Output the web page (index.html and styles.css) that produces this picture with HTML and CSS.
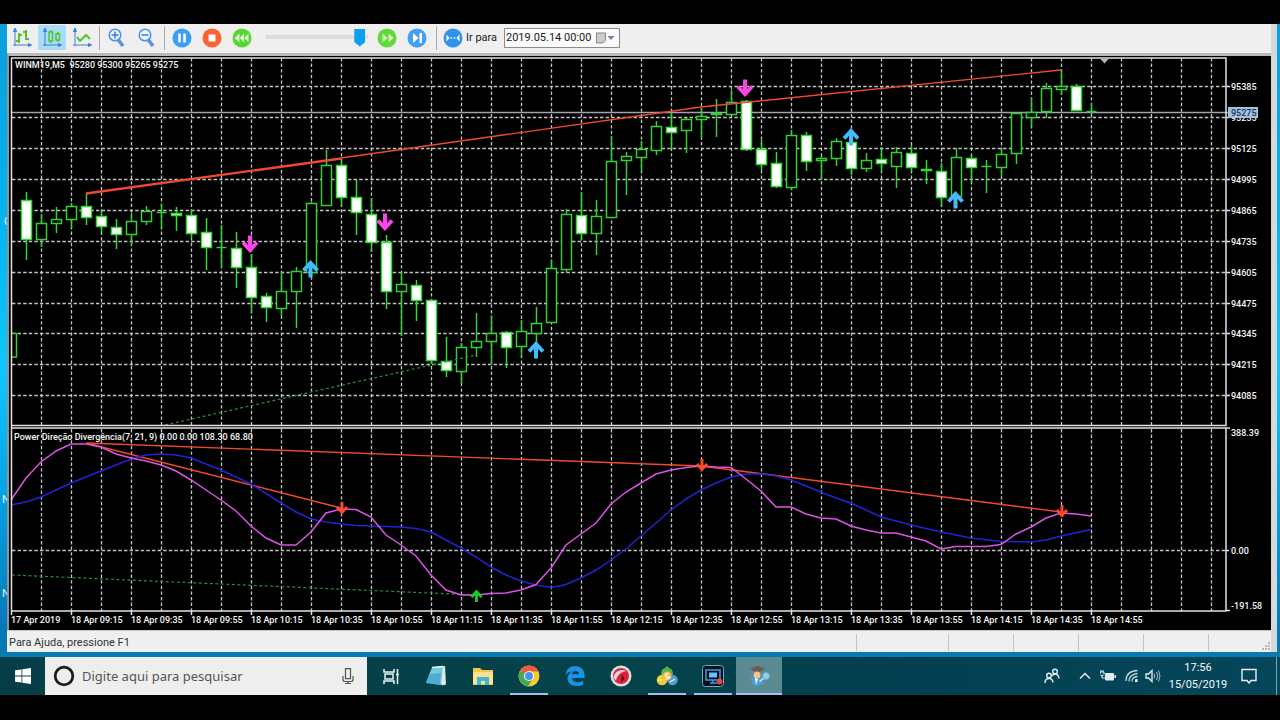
FILE: index.html
```html
<!DOCTYPE html>
<html lang="pt-BR">
<head>
<meta charset="utf-8">
<title>WINM19,M5</title>
<link rel="stylesheet" href="styles.css">
</head>
<body>
<main class="desktop">
  <span class="shortcut shortcut-a">C</span>
  <span class="shortcut shortcut-b">N</span>
  <span class="shortcut shortcut-c">N</span>
  <section class="window">
    <div class="toolbar">
      <button class="tool" aria-label="Barras"><svg viewBox="0 0 20 20"><g class="axis"><path d="M3 1v17M1 17h17M3 0L1.500 3.500h3zM19.500 17l-3-1.500v3z"/></g><path class="lime" d="M7 5v10M7 13h-3M7 7h3M14 2v10M14 4h-3M14 11h3"/></svg></button>
      <button class="tool tool-on" aria-label="Velas"><svg viewBox="0 0 20 20"><g class="axis"><path d="M3 1v17M1 17h17M3 0L1.500 3.500h3zM19.500 17l-3-1.500v3z"/></g><path class="lime thin" d="M7 4h3.500v9H7zM8.700 2v2M8.700 13v2M14 6h3.500v6H14zM15.700 4v2M15.700 12v2"/></svg></button>
      <button class="tool" aria-label="Linha"><svg viewBox="0 0 20 20"><g class="axis"><path d="M3 1v17M1 17h17M3 0L1.500 3.500h3zM19.500 17l-3-1.500v3z"/></g><path class="lime" d="M5 9l3 4 6-6 4 4"/></svg></button>
      <span class="sep"></span>
      <button class="tool" aria-label="Ampliar"><svg viewBox="0 0 20 20"><path d="M11 11.500l5 6.500" stroke="#5b8fe0" stroke-width="3.500"/><circle cx="8" cy="7" r="5.800" fill="#eef6ff" stroke="#4a92f0" stroke-width="1.500"/><path d="M4.500 7h7M8 3.500v7" stroke="#3779dd" stroke-width="1.500"/></svg></button>
      <button class="tool" aria-label="Reduzir"><svg viewBox="0 0 20 20"><path d="M11 11.500l5 6.500" stroke="#5b8fe0" stroke-width="3.500"/><circle cx="8" cy="7" r="5.800" fill="#eef6ff" stroke="#4a92f0" stroke-width="1.500"/><path d="M4.500 7h7" stroke="#3779dd" stroke-width="1.500"/></svg></button>
      <span class="sep"></span>
      <button class="tool" aria-label="Pausar"><svg viewBox="0 0 20 20"><circle cx="10" cy="10" r="9.500" fill="#3a9df6"/><path d="M7.500 5.500v9M12.500 5.500v9" stroke="#fff" stroke-width="2.500"/></svg></button>
      <button class="tool" aria-label="Parar"><svg viewBox="0 0 20 20"><circle cx="10" cy="10" r="9.500" fill="#fb6334"/><path d="M6.500 6.500h7v7h-7z" fill="#fff"/></svg></button>
      <button class="tool" aria-label="Mais lento"><svg viewBox="0 0 20 20"><circle cx="10" cy="10" r="9.500" fill="#5bd334"/><path d="M7.500 5.500v9L2.500 10zM12 5.500v9L7.800 10zM16.500 5.500v9L12.200 10z" fill="#d5f8c5"/></svg></button>
      <input class="speed" type="range" min="0" max="100" value="97" aria-label="Velocidade">
      <button class="tool" aria-label="Mais rápido"><svg viewBox="0 0 20 20"><circle cx="10" cy="10" r="9.500" fill="#62d93a"/><path d="M5.500 5.500v9L10.500 10zM11.500 5.500v9l5-4.500z" fill="#d5f8c5"/></svg></button>
      <button class="tool" aria-label="Próxima barra"><svg viewBox="0 0 20 20"><circle cx="10" cy="10" r="9.500" fill="#429ff4"/><path d="M6 5v10l5.500-5zM12.500 5H15v10h-2.500z" fill="#fff"/></svg></button>
      <span class="sep sep-last"></span>
      <button class="tool goto" id="goto"><svg viewBox="0 0 20 20"><circle cx="10" cy="10" r="9.500" fill="#2f92ee"/><path d="M3.500 6.500v7L6.500 10zM16.500 6.500v7l-3-3.500zM7.500 9.200h1.600v1.600H7.500zM10.700 9.200h1.600v1.600h-1.600z" fill="#fff"/></svg>Ir para</button>
      <div class="datebox">
        <input type="text" value="2019.05.14 00:00" aria-labelledby="goto">
        <button aria-label="Abrir calendário"><svg viewBox="0 0 20 12"><path d="M1.500 1h9v7.500l-2.500 2.500H1.500z" fill="#ccc" stroke="#888"/><path d="M12.500 4h7L16 8z" fill="#7a7ab8"/></svg></button>
      </div>
    </div>
    <div class="chart">
      <svg id="chart" viewBox="10 56 1261 574" role="img" aria-label="Gráfico WINM19, M5"></svg>
    </div>
    <footer class="status">
      <span class="help">Para Ajuda, pressione F1</span>
      <span class="cell cell-wide"></span><span class="cell"></span><span class="cell"></span><span class="cell"></span><span class="cell"></span><span class="cell cell-grip"><svg class="grip" viewBox="0 0 9 9"><path d="M6 0h2v2H6zM3 3h2v2H3zM6 3h2v2H6zM0 6h2v2H0zM3 6h2v2H3zM6 6h2v2H6z" fill="#b5b5b5"/></svg></span>
    </footer>
  </section>
</main>
<nav class="taskbar">
  <button class="start" aria-label="Iniciar"><svg viewBox="0 0 16 16"><path d="M0 2.300l6.500-.9v6.200H0zM7.300 1.300L16 0v7.600H7.300zM0 8.400h6.500v6.200L0 13.700zM7.300 8.400H16V16l-8.700-1.300z" fill="#fff"/></svg></button>
  <div class="search">
    <svg class="ring" viewBox="0 0 20 20"><circle cx="10" cy="10" r="8" fill="none" stroke="#1a1a1a" stroke-width="2.500"/></svg>
    <input type="text" placeholder="Digite aqui para pesquisar" aria-label="Pesquisar">
    <svg class="mic" viewBox="0 0 12 16"><path d="M3.500 .7h5v10h-5zM1 8v3.500q0 2 2 2h6q2 0 2-2V8M6 13.500v2M3 15.500h6" fill="none" stroke="#555" stroke-width="1.200"/></svg>
  </div>
  <button class="task" aria-label="Visão de tarefas"><svg viewBox="0 0 22 22"><path d="M4 4v3h10V4M5 9h8v5H5zM4 19v-3h10v3M17.500 4v15M16 9.500h3" fill="none" stroke="#e8f4f4" stroke-width="1.500"/></svg></button>
  <button class="task" aria-label="Bloco de notas"><svg viewBox="0 0 22 22"><path d="M6 2.500L19 1l1 18.500-4 1z" fill="#d9e8e9"/><path d="M6 2.500l11-1L15 20 0 17.500z" fill="#78c8e2"/><path d="M4 9l11-1-1 12-14-2z" fill="#51abd0"/><path d="M6 2.500l11-1" stroke="#e9fbff" stroke-width="1.500"/></svg></button>
  <button class="task" aria-label="Explorador de arquivos"><svg viewBox="0 0 22 22"><path d="M1 3h7l2 2h11v15H1z" fill="#f4c64d"/><path d="M1 7h20v12H1z" fill="#ffe08b"/><path d="M5 20v-8h12v8h-4v-4H9v4z" fill="#3fb5dc"/></svg></button>
  <button class="task running" aria-label="Chrome"><svg viewBox="0 0 22 22"><circle cx="11" cy="11" r="10.500" fill="#f5c92f"/><path d="M11 11L2 5.700A10.500 10.500 0 0 1 20.500 6.500H11z" fill="#ee5b40"/><path d="M2 5.700A10.500 10.500 0 0 0 10 21.400L15 13z" fill="#43ab52"/><circle cx="11" cy="11" r="5" fill="#f5f5f5"/><circle cx="11" cy="11" r="3.900" fill="#4b8df0"/></svg></button>
  <button class="task" aria-label="Edge"><svg viewBox="0 0 22 22"><path d="M1.500 10C2.500 4 6 1 11 1c6 0 9.500 4 9.500 9v3H8c.3 3 3 4.200 6 4.200 2 0 3.800-.5 5.200-1.400v4C17.500 20.700 15 21 12.700 21 7 21 3.500 18 3.500 13.500c0-3 1.800-5.500 4.500-7C5 6.800 3 8 1.500 10zM8.200 9.300h6.600c0-2.200-1-3.500-3.200-3.500-2 0-3.200 1.500-3.400 3.500z" fill="#1893e8"/></svg></button>
  <button class="task" aria-label="Navegador"><svg viewBox="0 0 22 22"><circle cx="11" cy="11" r="10.500" fill="#dcdedf"/><circle cx="11" cy="11" r="8" fill="#d8243c"/><path d="M3.500 12C5 6 11 3.500 16.500 6 12 6.500 8 8.500 6 15.500q-2-1-2.500-3.500z" fill="#fff" opacity=".8"/><path d="M12 9l2.500 5-3.500 3.500z" fill="#5b1020"/></svg></button>
  <button class="task running" aria-label="MetaTrader"><svg viewBox="0 0 22 22"><path d="M5 9q0-5 4-6l2-2 2 2q4 1 4 6l-3 3H8z" fill="#55b348"/><circle cx="6" cy="15" r="5.300" fill="#e8d035"/><circle cx="16.500" cy="15" r="5.300" fill="#4b9fd9"/><circle cx="11" cy="11" r="4.500" fill="#f6b34b"/><path d="M13 9q-4-1-4 1t4 2-4 2M11 7.500v7" fill="none" stroke="#fff5d0" stroke-width="1.200"/><path d="M2 15h4M14 17l5-3" stroke="#fff9c0" stroke-width="1.200"/></svg></button>
  <button class="task running" aria-label="Gravador de tela"><svg viewBox="0 0 22 22"><rect x="0.500" y="0.500" width="21" height="21" rx="3" fill="#03101c" stroke="#7ba7b8"/><path d="M4 5h14v10H4zM8 18h7M11 15v3" fill="none" stroke="#429ddd" stroke-width="1.500"/><path d="M7 7.500h8v5H7z" fill="#6bc0ff"/><circle cx="17.500" cy="16.500" r="3" fill="#e2493f"/></svg></button>
  <button class="task running active" aria-label="Testador de estratégia"><svg viewBox="0 0 22 22"><path d="M2 4l8-3.500L17 4l-7 4z" fill="#6b5c56"/><path d="M5 6q5 3 9 0v4H5z" fill="#8b7469"/><circle cx="9" cy="10" r="3.500" fill="#edc49b"/><path d="M3 12l6 2 5-2 2 6-8 3-4-2z" fill="#4aa0dc"/><path d="M7 13l3 1-2 6z" fill="#fff"/><circle cx="18" cy="11" r="3.500" fill="#93cdf0" stroke="#6aa7cf"/><path d="M15.500 13.500l-4 3" stroke="#d9e9f0" stroke-width="1.500"/></svg></button>
  <div class="tray">
    <svg class="people" viewBox="0 0 16 16"><g fill="none" stroke="#dfeef0" stroke-width="1.400"><circle cx="5" cy="7.500" r="2.300"/><path d="M1 15q0-4.500 4-4.500 3.500 0 4 4"/><circle cx="11" cy="3.500" r="2.300"/><path d="M8 8q1-2 3-2 3.500 0 4 4.500"/></g></svg>
    <svg class="chevron" viewBox="0 0 12 12"><path d="M1 8.500l5-5 5 5" fill="none" stroke="#dfeef0" stroke-width="1.500"/></svg>
    <svg class="battery" viewBox="0 0 16 12"><path d="M5.500 3.500h8v6.500h-8z" fill="#dfeef0" stroke="#dfeef0"/><path d="M14.500 5h1.500v3h-1.500z" fill="#dfeef0"/><path d="M0 2h4v2.500l-1 1H1l-1-1zM1 0v2M3 0v2M2 5.500V8h3" fill="none" stroke="#dfeef0"/></svg>
    <svg class="wifi" viewBox="0 0 14 14"><g fill="none" stroke="#bcd5da" stroke-width="1.300"><path d="M1 12Q1 2 12.500 1.500M4 12.500q0-7 8.500-8M7 12.500Q7 8 12.500 7.500"/></g><path d="M10 13v-2.500l2.500-.5v3z" fill="#fff"/></svg>
    <svg class="speaker" viewBox="0 0 16 14"><path d="M1 5h2.500L7 1.500v11L3.500 9H1z" fill="none" stroke="#e8f4f4" stroke-width="1.300"/><path d="M9 4.500q1.500 2.500 0 5M11.500 3q2.500 4 0 8M13.500 1.500q3 5.500 0 11" fill="none" stroke="#9fc0c8"/></svg>
    <time class="clock" datetime="2019-05-15T17:56"><span>17:56</span><span>15/05/2019</span></time>
    <svg class="notice" viewBox="0 0 16 16"><path d="M1 1.500h14v11h-5L8 15l-2-2.500H1z" fill="none" stroke="#e8f4f4" stroke-width="1.400"/></svg>
  </div>
</nav>
<script src="chart.js"></script>
</body>
</html>
```
FILE: styles.css
```css
* { box-sizing: border-box; }

body {
  margin: 0;
  min-height: 100vh;
  padding: 24px 0 25px;
  display: flex;
  flex-direction: column;
  background: #000;
  font-family: Roboto, "Noto Sans", sans-serif;
}

button {
  border: 0;
  padding: 0;
  background: none;
  font: inherit;
  color: inherit;
}

svg { display: block; }

.desktop {
  position: relative;
  flex: 1;
  padding: 0 3px 5px 7px;
  background: linear-gradient(#0b9fdc 0%, #03b4ec 30%, #10c6fa 55%, #06a6e8 72%, #0576b6 97%, #0a7bad 100%);
}

.shortcut {
  position: absolute;
  left: 0;
  width: 7px;
  padding-left: 2px;
  overflow: hidden;
  font-size: 11px;
  line-height: 14px;
  color: #e6f6ff;
}
.shortcut-a { top: 191px; padding-left: 4px; }
.shortcut-b { top: 469px; }
.shortcut-c { top: 563px; }

.window {
  display: flex;
  flex-direction: column;
  height: 100%;
  background: #eeeeee;
  border-right: 6px solid #d4dadc;
}

.toolbar {
  display: flex;
  align-items: center;
  gap: 2px;
  height: 29px;
  padding: 0 0 2px 1px;
  background: #eeefee;
}

.tool {
  display: flex;
  align-items: center;
  justify-content: center;
  width: 28px;
  height: 25px;
}
.tool svg { width: 20px; height: 20px; flex: none; }
.tool-on { background: #a9dcf6; }
.axis { fill: #3d7fdc; stroke: #3d7fdc; stroke-width: 1; }
.lime { fill: none; stroke: #4fc531; stroke-width: 2; }
.lime.thin { stroke-width: 1.5px; }

.sep { width: 1px; height: 24px; margin: 0 1px; background: #a9a9a9; }
.sep-last { margin: 0 0 0 3px; }

.speed {
  appearance: none;
  width: 102px;
  height: 20px;
  margin: 0 3px 0 8px;
  background: linear-gradient(#dcdcdc, #dcdcdc) center 7px / 100% 4px no-repeat;
}
.speed::-webkit-slider-thumb {
  appearance: none;
  width: 11px;
  height: 18px;
  background: #0a9ff0;
  clip-path: polygon(0 0, 100% 0, 100% 75%, 50% 100%, 0 75%);
}

.goto {
  width: 59px;
  padding-left: 4px;
  justify-content: flex-start;
  gap: 3px;
  font-size: 11px;
  color: #222;
  white-space: nowrap;
}

.datebox {
  display: flex;
  align-items: center;
  width: 116px;
  height: 20px;
  margin-left: 4px;
  background: #fbfbfb;
  border: 1px solid #8b8b8b;
}
.datebox input {
  flex: 1;
  min-width: 0;
  padding: 0 0 0 1px;
  border: 0;
  background: none;
  font: 11px Roboto, "Noto Sans", sans-serif;
  color: #222;
}
.datebox button { width: 20px; margin-right: 4px; }

.chart {
  flex: 1;
  min-height: 0;
  padding-left: 1px;
  background: #000;
  border: solid #8f9496;
  border-width: 3px 0 0 2px;
  border-top-color: #b9bbbb;
}
.chart svg { width: 100%; height: 100%; }
.chart text { font-size: 9px; font-weight: 500; fill: #f6f6f6; }
.chart text.price-now { fill: #16345c; }

.grid { fill: none; stroke: #c4c4c4; stroke-width: 1.300px; stroke-dasharray: 3.400 2.200; }
.frame { fill: none; stroke: #e2e2e2; stroke-width: 1.500px; }
.hollow { fill: #000; stroke: #35cf35; stroke-width: 1.500px; }
.solid { fill: #fff; stroke: #35d935; stroke-width: 1.500px; }
.trend { fill: none; stroke: #f04a2e; stroke-width: 1.400px; }
.support { fill: none; stroke: #2f8b3c; stroke-width: 1.200px; stroke-dasharray: 3 2.500; }
.fast { fill: none; stroke: #dd52e6; stroke-width: 1.500px; }
.slow { fill: none; stroke: #2222d8; stroke-width: 1.500px; }

.status {
  display: flex;
  height: 22px;
  border-top: 1px solid #c9c9c9;
  background: #efefef;
}
.help {
  flex: 1;
  padding-left: 2px;
  font-size: 11px;
  line-height: 24px;
  color: #333;
}
.cell { width: 65px; margin: 3px 0 1px; border-left: 1px solid #c3c3c3; }
.cell-wide { width: 92px; }
.cell-grip { display: flex; align-items: flex-end; justify-content: flex-end; width: 63px; }
.grip { width: 9px; height: 9px; }

.taskbar {
  display: flex;
  height: 38px;
  background: linear-gradient(90deg, #063e48 0%, #05424a 50%, #033f50 70%, #06465a 100%);
}
.start { display: flex; align-items: center; justify-content: center; width: 45px; }
.start svg { width: 16px; height: 16px; }

.search {
  display: flex;
  align-items: center;
  width: 322px;
  margin-right: 1px;
  padding: 0 13px 0 8px;
  background: #eeeeee;
}
.ring { width: 22px; height: 22px; }
.mic { width: 12px; height: 16px; }
.search input {
  flex: 1;
  min-width: 0;
  padding: 0 0 0 7px;
  border: 0;
  background: none;
  font: 13px "Noto Sans", "Open Sans", sans-serif;
}
.search input::placeholder { color: #555; opacity: 1; }

.task {
  display: flex;
  align-items: center;
  justify-content: center;
  width: 46px;
}
.task svg { width: 22px; height: 22px; }
.running { background: linear-gradient(#9cc4f0, #9cc4f0) center bottom / 38px 2px no-repeat; }
.active { background: linear-gradient(#9cc4f0, #9cc4f0) center bottom / 100% 2px no-repeat #5b8a90; }

.tray {
  display: flex;
  align-items: center;
  margin-left: auto;
  margin-right: 3px;
  padding-right: 19px;
  border-right: 1px solid #7ba2ae;
}
.people { width: 16px; height: 16px; margin-right: 19px; }
.chevron { width: 12px; height: 12px; margin-right: 9px; }
.battery { width: 16px; height: 12px; margin-right: 9px; }
.wifi { width: 14px; height: 14px; margin-right: 6px; }
.speaker { width: 16px; height: 14px; margin-right: 9px; }
.clock {
  display: flex;
  flex-direction: column;
  align-items: center;
  width: 56px;
  font-size: 11px;
  line-height: 17px;
  color: #f2fafa;
}
.notice { width: 16px; height: 16px; margin-left: 15px; }
```
FILE: chart.js
```js
const svg = document.getElementById("chart");
const parts = [];

const STEP = 15;
const FIRST_X = 26.5;

// Grid
let grid = "";
for (let x = 41.5; x < 1226; x += 30) grid += `M${x} 58V425M${x} 429V611`;
const prices = [95385, 95255, 95125, 94995, 94865, 94735, 94605, 94475, 94345, 94215, 94085];
const priceY = i => Math.round(86 + i * 30.93) + 0.5;
prices.forEach((p, i) => { grid += `M12 ${priceY(i)}H1226`; });
grid += "M12 550.500H1226";
parts.push(`<path class="grid" d="${grid}"/>`);
parts.push('<path d="M12 112.500H1228" stroke="#a3a3b4" stroke-width="1.500"/>');

// Candles: high, body top, body bottom, low, filled
const candles = [
  [192,200,239,260,1],[214,223,239,247,0],[207,219,223,233,0],[203,206,219,228,0],[193,206,217,225,1],
  [211,216,226,232,1],[219,227,234,249,1],[213,221,234,245,0],[206,211,221,225,0],[204,212,212,228,0],
  [207,213,215,231,1],[210,215,233,239,1],[218,232,247,270,1],[225,247,247,268,0],[232,248,267,288,1],
  [254,267,297,313,1],[293,296,307,322,1],[272,291,308,316,0],[267,271,291,328,0],[202,203,272,275,0],
  [150,165,205,205,0],[159,165,197,207,1],[180,197,212,235,1],[198,214,242,252,1],[235,242,291,309,1],
  [272,284,291,336,0],[280,285,300,321,1],[299,300,360,364,1],[337,361,370,377,1],[343,347,371,383,0],
  [313,341,347,357,0],[316,333,341,364,0],[331,332,347,368,1],[320,331,346,357,0],[307,323,333,343,0],
  [260,268,322,323,0],[209,214,269,273,0],[192,215,233,240,1],[200,216,233,255,0],[136,161,217,217,0],
  [152,156,160,195,0],[141,149,157,172,0],[121,126,150,155,0],[112,127,132,149,1],[118,119,130,153,0],
  [108,116,119,138,0],[99,113,114,137,0],[90,102,114,114,0],[100,101,149,151,1],[140,149,164,170,1],
  [152,163,186,188,1],[130,135,187,190,0],[132,135,161,171,1],[156,158,160,180,0],[138,141,158,166,0],
  [138,142,168,175,1],[153,160,168,172,0],[147,159,163,172,1],[147,152,166,188,0],[145,153,167,172,1],
  [160,169,170,184,1],[163,171,197,207,1],[148,157,196,196,0],[155,158,167,183,1],[160,166,166,193,0],
  [148,154,167,176,0],[113,113,153,164,0],[98,112,117,127,0],[83,88,111,118,0],[70,86,89,95,0],
  [84,86,110,111,1],[103,111,111,114,0]
];
candles.forEach(([high, top, bottom, low, filled], i) => {
  const x = FIRST_X + i * STEP;
  const body = bottom === top
    ? `M${x - 5} ${top + 0.5}h10`
    : `M${x - 5} ${top + 0.5}h10V${bottom + 0.5}h-10z`;
  parts.push(`<path class="${filled ? "solid" : "hollow"}" d="M${x} ${high}V${top + 0.5}M${x} ${bottom + 0.5}V${low}${body}"/>`);
});
parts.push('<path class="hollow" d="M12 333.500h4.500V357H12"/>');

// Trend lines on both panels
parts.push('<path class="trend" d="M86 193L341 158L701 107L1061 70M86 194L341 159M86 443L701 466L1061 512M86 443L341 508"/>');
parts.push('<path class="support" d="M165 425L476 355M12 575L476 595"/>');

// Oscillator lines
const slow = [11,505,26,502,41,497,71,483,101,471,131,459,146,455,161,454,176,455,191,458,221,470,251,484,281,503,296,512,311,519,326,522,341,524,356,525.5,371,526,401,527,416,528.5,431,532,446,540,461,548,476,557,491,567,506,575,521,581,536,585,551,587.5,566,584.5,581,578,596,570,611,560,626,549,641,536,656,523,671,510,686,499,701,490,716,483,731,477,746,474,761,474,776,476,791,480,806,486,821,492,836,498,851,503,881,517,911,525,941,532,971,538,1001,541.5,1031,542,1046,540,1061,536,1091,529.5];
const fast = [11,500,26,478,41,462,56,451,71,444,86,444,101,447,116,454,131,458,146,461,161,465,176,471,191,480,206,490,221,500,236,511,251,526,266,538,281,545,296,545,311,532,326,513,341,509,356,509.5,371,517,386,535,401,545,416,556,431,575,446,590,461,595,476,595,491,593.5,506,593,521,590,536,584.5,551,568,566,545,581,534,596,523,611,504,626,492,641,483,656,474,671,470,686,467.5,701,466,716,467,731,467.5,746,479,761,491,776,507,791,507,806,514,821,518,836,519,851,526,866,530,881,533,896,533,911,537,926,541,941,549,956,546.5,986,546.5,1001,544.5,1016,534,1031,527,1046,518,1061,513,1076,514,1091,516];
parts.push(`<polyline class="slow" points="${slow}"/><polyline class="fast" points="${fast}"/>`);

// Signals
const arrow = (x, y, color, up, size) =>
  `<path transform="translate(${x} ${y}) scale(${size} ${up ? size : -size})" d="M0 8.500V-5M-7 1.500L0 -6L7 1.500" fill="none" stroke="${color}" stroke-width="4"/>`;
[[250,244],[385,222],[745,88]].forEach(([x, y]) => parts.push(arrow(x, y, "#fb45e4", false, 1)));
[[310.5,269],[536,350],[851,137],[955.5,200]].forEach(([x, y]) => parts.push(arrow(x, y, "#42bcfb", true, 1)));
[[342,508],[702,465],[1062,511]].forEach(([x, y]) => parts.push(arrow(x, y, "#fb4a2c", false, 0.72)));
parts.push(arrow(476.500, 596, "#1fc82a", true, 0.72));

// Frames and axis ticks
let frame = "M11.500 611V58H1226V425.500H11.500M1226 428H11.500M1226 428V611H11.500M1226 428h4M1226 610.500h4M1226 550.500h3";
prices.forEach((p, i) => { frame += `M1226 ${priceY(i)}h4`; });
for (let x = 11.5; x < 1100; x += 60) frame += `M${x} 611v4`;
parts.push(`<path class="frame" d="${frame}"/>`);
parts.push('<path d="M1100 58.500h9l-4.500 5z" fill="#b4b4c4"/>');

// Labels
const label = (x, y, text, cls = "") => parts.push(`<text x="${x}" y="${y}" class="${cls}" xml:space="preserve">${text}</text>`);
prices.forEach((p, i) => label(1231, priceY(i) + 3, p));
parts.push('<rect x="1228" y="107" width="30" height="11" fill="#a3c0de"/>');
label(1231, 116, "95275", "price-now");
label(1231, 435.5, "388.39");
label(1231, 553.5, "0.00");
label(1231, 609, "-191.58");
label(15, 67.5, "WINM19,M5  95280 95300 95265 95275");
label(14, 439.5, "Power Direção Divergência(7, 21, 9) 0.00 0.00 108.30 68.80");
const times = ["17 Apr 2019", "18 Apr 09:15", "18 Apr 09:35", "18 Apr 09:55", "18 Apr 10:15", "18 Apr 10:35", "18 Apr 10:55", "18 Apr 11:15", "18 Apr 11:35", "18 Apr 11:55", "18 Apr 12:15", "18 Apr 12:35", "18 Apr 12:55", "18 Apr 13:15", "18 Apr 13:35", "18 Apr 13:55", "18 Apr 14:15", "18 Apr 14:35", "18 Apr 14:55"];
times.forEach((t, i) => label(11 + i * 60, 623, t));

svg.innerHTML = parts.join("");
```
